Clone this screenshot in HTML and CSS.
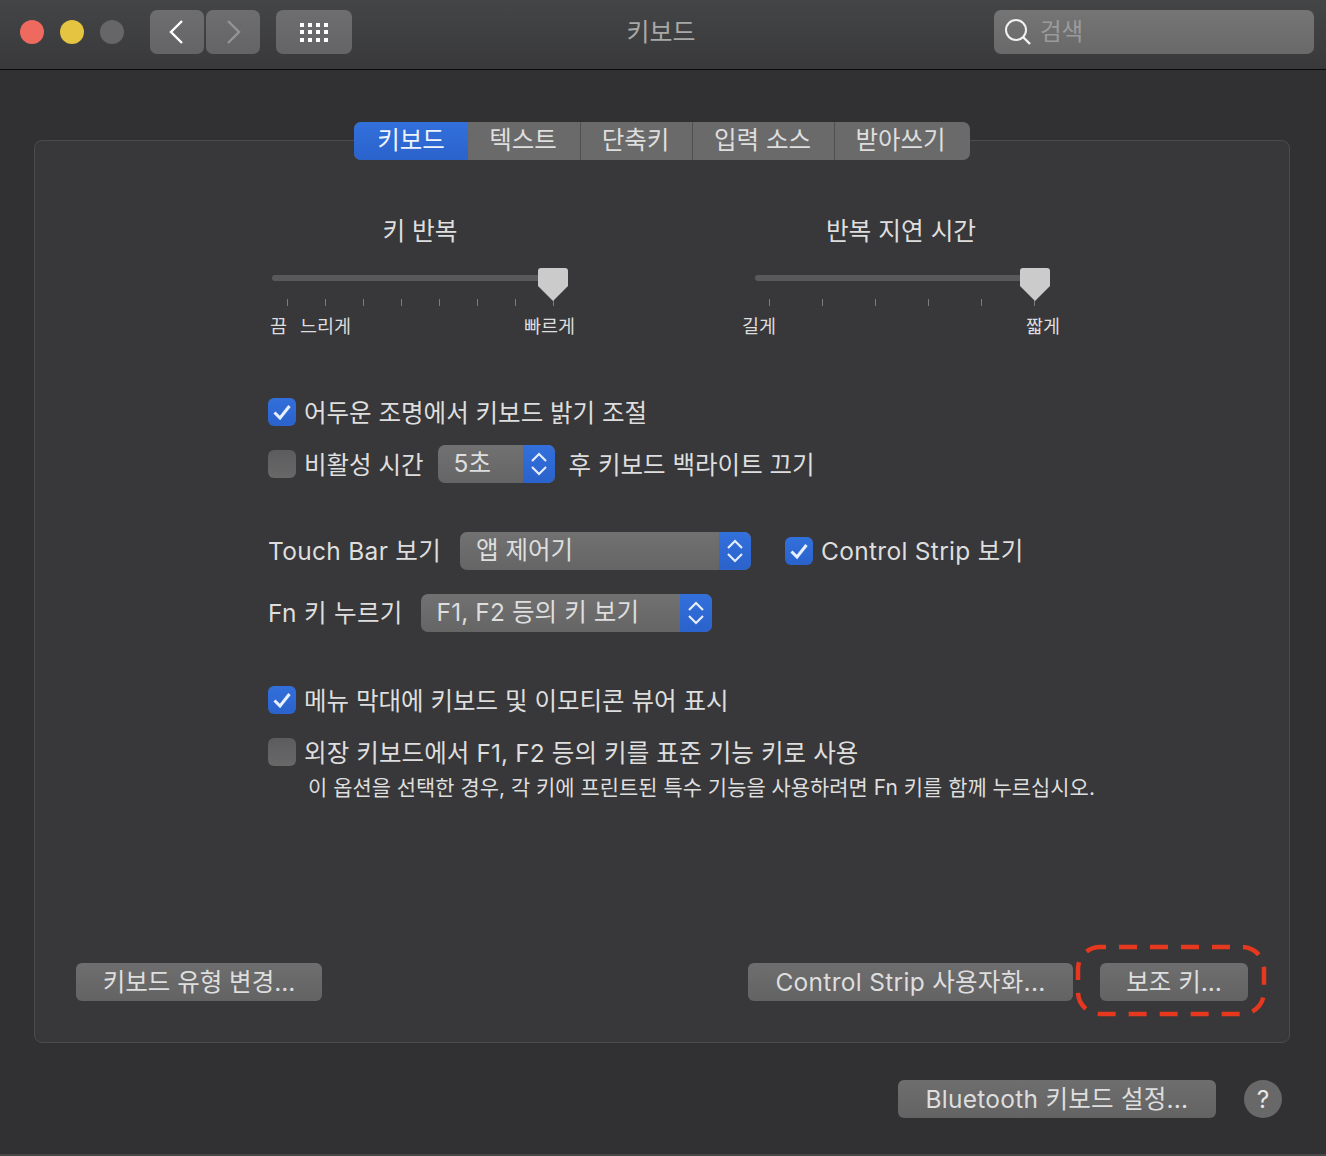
FILE: index.html
```html
<!DOCTYPE html>
<html lang="ko">
<head>
  <meta charset="UTF-8" />
  <title>키보드</title>
  <link rel="stylesheet" href="styles.css">
</head>
<body>
  <div class="window">
    <header class="toolbar">
      <div class="lights">
        <span class="light red"></span>
        <span class="light yellow"></span>
        <span class="light grey"></span>
      </div>
      <div class="nav">
        <div class="tool-btn nav-btn">
          <svg width="18" height="26" viewBox="0 0 18 26"><path d="M14 2 3 13l11 11" fill="none" stroke="#fff" stroke-width="2.4"/></svg>
        </div>
        <div class="tool-btn nav-btn">
          <svg width="18" height="26" viewBox="0 0 18 26"><path d="M4 2l11 11L4 24" fill="none" stroke="#949494" stroke-width="2.4"/></svg>
        </div>
      </div>
      <div class="tool-btn grid-btn">
        <svg width="30" height="20" viewBox="0 0 30 20" fill="#fff">
          <rect x="1" y="1" width="4" height="4"/><rect x="9" y="1" width="4" height="4"/><rect x="17" y="1" width="4" height="4"/><rect x="25" y="1" width="4" height="4"/>
          <rect x="1" y="8" width="4" height="4"/><rect x="9" y="8" width="4" height="4"/><rect x="17" y="8" width="4" height="4"/><rect x="25" y="8" width="4" height="4"/>
          <rect x="1" y="16" width="4" height="4"/><rect x="9" y="16" width="4" height="4"/><rect x="17" y="16" width="4" height="4"/><rect x="25" y="16" width="4" height="4"/>
        </svg>
      </div>
      <div class="window-title">키보드</div>
      <div class="search">
        <svg width="28" height="28" viewBox="0 0 28 28"><circle cx="12" cy="12" r="10" fill="none" stroke="#f2f2f2" stroke-width="2"/><path d="M19 19l7 7" stroke="#f2f2f2" stroke-width="2.4"/></svg>
        <span>검색</span>
      </div>
    </header>

    <main class="content">
      <section class="panel">
        <nav class="tabs">
          <div class="tab active tab-keyboard">키보드</div>
          <div class="tab tab-text">텍스트</div>
          <div class="tab tab-short">단축키</div>
          <div class="tab tab-input">입력 소스</div>
          <div class="tab tab-dict">받아쓰기</div>
        </nav>

        <div class="sliders">
          <div class="slider slider-repeat">
            <h2>키 반복</h2>
            <div class="slider-body">
              <div class="track"></div>
              <svg class="thumb" width="30" height="34" viewBox="0 0 30 34"><path d="M3 0h24a3 3 0 0 1 3 3v15L15 33 0 18V3a3 3 0 0 1 3-3z" fill="#cbcbcb"/></svg>
              <div class="ticks">
                <i></i><i></i><i></i><i></i><i></i><i></i><i></i><i></i>
              </div>
            </div>
            <div class="scale">
              <span>끔</span>
              <span class="slow">느리게</span>
              <span class="push">빠르게</span>
            </div>
          </div>
          <div class="slider slider-delay">
            <h2>반복 지연 시간</h2>
            <div class="slider-body">
              <div class="track"></div>
              <svg class="thumb" width="30" height="34" viewBox="0 0 30 34"><path d="M3 0h24a3 3 0 0 1 3 3v15L15 33 0 18V3a3 3 0 0 1 3-3z" fill="#cbcbcb"/></svg>
              <div class="ticks">
                <i></i><i></i><i></i><i></i><i></i><i></i>
              </div>
            </div>
            <div class="scale">
              <span>길게</span>
              <span class="push">짧게</span>
            </div>
          </div>
        </div>

        <div class="row row-backlight">
          <span class="check on"><svg width="20" height="18" viewBox="0 0 20 18"><path d="M2.500 9.500 8 15 17.500 3" fill="none" stroke="#e9f0fd" stroke-width="3"/></svg></span>
          <span>어두운 조명에서 키보드 밝기 조절</span>
        </div>
        <div class="row row-idle">
          <span class="check"></span>
          <span>비활성 시간</span>
          <div class="select select-time">
            <span class="select-value">5초</span>
            <span class="select-arrows"><svg width="18" height="26" viewBox="0 0 18 26"><path d="M2 10l7-7 7 7M2 16l7 7 7-7" fill="none" stroke="#e4ecfb" stroke-width="2.200"/></svg></span>
          </div>
          <span>후 키보드 백라이트 끄기</span>
        </div>

        <div class="row row-touchbar">
          <span class="latin">Touch Bar 보기</span>
          <div class="select select-touch">
            <span class="select-value">앱 제어기</span>
            <span class="select-arrows"><svg width="18" height="26" viewBox="0 0 18 26"><path d="M2 10l7-7 7 7M2 16l7 7 7-7" fill="none" stroke="#e4ecfb" stroke-width="2.200"/></svg></span>
          </div>
          <span class="check on strip-check"><svg width="20" height="18" viewBox="0 0 20 18"><path d="M2.500 9.500 8 15 17.500 3" fill="none" stroke="#e9f0fd" stroke-width="3"/></svg></span>
          <span class="latin">Control Strip 보기</span>
        </div>
        <div class="row row-fn">
          <span class="latin">Fn 키 누르기</span>
          <div class="select select-fn">
            <span class="select-value">F1, F2 등의 키 보기</span>
            <span class="select-arrows"><svg width="18" height="26" viewBox="0 0 18 26"><path d="M2 10l7-7 7 7M2 16l7 7 7-7" fill="none" stroke="#e4ecfb" stroke-width="2.200"/></svg></span>
          </div>
        </div>

        <div class="row row-menu">
          <span class="check on"><svg width="20" height="18" viewBox="0 0 20 18"><path d="M2.500 9.500 8 15 17.500 3" fill="none" stroke="#e9f0fd" stroke-width="3"/></svg></span>
          <span>메뉴 막대에 키보드 및 이모티콘 뷰어 표시</span>
        </div>
        <div class="row row-external">
          <span class="check"></span>
          <span class="external-label">외장 키보드에서 F1, F2 등의 키를 표준 기능 키로 사용</span>
        </div>
        <p class="note">이 옵션을 선택한 경우, 각 키에 프린트된 특수 기능을 사용하려면 Fn 키를 함께 누르십시오.</p>

        <div class="panel-actions">
          <div class="btn btn-type">키보드 유형 변경...</div>
          <div class="btn btn-strip">Control Strip 사용자화...</div>
          <div class="highlighted">
            <div class="btn btn-modifier">보조 키...</div>
            <svg class="dashes" width="194" height="76" viewBox="0 0 194 76"><rect x="4" y="4" width="186" height="67" rx="22" fill="none" stroke="#e5381f" stroke-width="4.500" stroke-dasharray="18 13" stroke-dashoffset="12"/></svg>
          </div>
        </div>
      </section>

      <footer class="footer">
        <div class="btn btn-bluetooth">Bluetooth 키보드 설정...</div>
        <div class="help">?</div>
      </footer>
    </main>
  </div>
</body>
</html>
```

FILE: styles.css
```css
* {
  box-sizing: border-box;
}

body {
  margin: 0;
  background: #313133;
  overflow: hidden;
  font-family: "Inter", "Noto Sans CJK KR", sans-serif;
  color: #dedede;
}

.window {
  width: 1326px;
  height: 1156px;
  display: flex;
  flex-direction: column;
  border-bottom: 2px solid #464648;
}

/* toolbar */

.toolbar {
  height: 70px;
  flex: none;
  display: flex;
  align-items: flex-start;
  padding: 10px 12px 0 20px;
  background: linear-gradient(#444546, #39393b);
  border-bottom: 1px solid #0b0b0b;
}

.lights {
  display: flex;
  gap: 16px;
  margin-top: 10px;
  margin-right: 26px;
}

.light {
  width: 24px;
  height: 24px;
  border-radius: 50%;
}

.red { background: #ee6a5f; }
.yellow { background: #e4c440; }
.grey { background: #666668; }

.tool-btn {
  height: 44px;
  display: flex;
  align-items: center;
  justify-content: center;
  border-radius: 7px;
  background: linear-gradient(#6e6e70, #646466);
}

.nav {
  display: flex;
  gap: 2px;
}

.nav-btn {
  width: 54px;
}

.grid-btn {
  width: 76px;
  margin-left: 16px;
}

.window-title {
  flex: 1;
  padding-right: 24px;
  line-height: 44px;
  text-align: center;
  font-size: 25px;
  color: #a8a8a8;
}

.search {
  width: 320px;
  height: 44px;
  display: flex;
  align-items: center;
  gap: 8px;
  padding: 0 10px;
  border-radius: 7px;
  background: linear-gradient(#757575, #696969);
  font-size: 23.500px;
  color: #9b9b9b;
}

.search span {
  margin-bottom: 5px;
}

/* panel */

.content {
  flex: 1;
  padding: 70px 36px 0 34px;
}

.panel {
  height: 903px;
  display: flex;
  flex-direction: column;
  padding: 0 40px 41px 233px;
  border: 1px solid #4b4b4d;
  border-radius: 8px;
  background: #38383a;
  font-size: 24.500px;
}

.tabs {
  display: flex;
  height: 38px;
  margin: -19px 0 0 86px;
  align-self: flex-start;
  border-radius: 7px;
  background: #6a6a6b;
  overflow: hidden;
}

.tab {
  display: flex;
  align-items: center;
  justify-content: center;
  padding: 0 2px 5px 0;
  border-right: 1px solid #505051;
}

.tab:last-child {
  border-right: 0;
  padding-right: 4px;
}

.tab.active {
  background: linear-gradient(#3270dc, #2b62cb);
  border-right: 0;
  padding-right: 0;
  color: #eef3fc;
}

.tab-keyboard { width: 114px; }
.tab-text { width: 113px; }
.tab-short { width: 112px; }
.tab-input { width: 142px; }
.tab-dict { width: 135px; }

/* sliders */

.sliders {
  display: flex;
  gap: 167px;
  margin: 55px 0 0 -3px;
}

.slider-repeat { width: 310px; }
.slider-delay { width: 318px; }

.slider h2 {
  margin: 0;
  height: 30px;
  line-height: 32px;
  text-align: center;
  font-size: 24.700px;
  font-weight: 400;
}

.slider-body {
  position: relative;
  height: 47px;
  margin-top: 23px;
  padding-top: 7px;
}

.track {
  height: 6px;
  border-radius: 3px;
  background: #59595b;
}

.slider-repeat .track {
  margin: 0 20px 0 7px;
}

.slider-delay .track {
  margin: 0 20px 0 13px;
}

.thumb {
  position: absolute;
  top: 0;
}

.slider-repeat .thumb { left: 273px; }
.slider-delay .thumb { left: 278px; }

.ticks {
  display: flex;
  margin-top: 18px;
}

.slider-repeat .ticks {
  gap: 37px;
  padding-left: 22px;
}

.slider-delay .ticks {
  gap: 52px;
  padding-left: 27px;
}

.ticks i {
  width: 1px;
  height: 7px;
  background: #7b7b7d;
}

.scale {
  display: flex;
  height: 22px;
  line-height: 23px;
  font-size: 18.500px;
}

.slider-repeat .scale {
  padding-left: 5px;
}

.slow {
  margin-left: 13px;
}

.push {
  margin-left: auto;
}

/* form rows */

.row {
  display: flex;
  align-items: center;
  height: 38px;
  white-space: nowrap;
}

.row > span {
  margin-bottom: 2px;
}

.row > .latin {
  margin-bottom: 3px;
  letter-spacing: 0.3px;
}

.row > .check {
  margin-bottom: 0;
}

.row > .external-label {
  letter-spacing: 0.1px;
}

.row-backlight { margin-top: 56px; }
.row-idle { margin-top: 14px; }
.row-touchbar { margin-top: 49px; }
.row-fn { margin-top: 24px; }
.row-menu { margin-top: 49px; }
.row-external { margin-top: 14px; }

.check {
  width: 28px;
  height: 28px;
  flex: none;
  display: flex;
  align-items: center;
  justify-content: center;
  margin-right: 8px;
  border-radius: 6px;
  background: linear-gradient(#5c5c5e, #686869);
}

.check.on {
  background: linear-gradient(#3270dc, #2b62cb);
}

.strip-check {
  margin-left: 34px;
}

.select {
  height: 38px;
  display: flex;
  border-radius: 7px;
  overflow: hidden;
  background: linear-gradient(#717171, #656565);
}

.select-value {
  flex: 1;
  padding-left: 16px;
  line-height: 37px;
}

.select-arrows {
  width: 32px;
  display: flex;
  align-items: center;
  justify-content: center;
  background: linear-gradient(#3270dc, #2b62cb);
}

.select-time {
  width: 117px;
  margin: 0 14px;
}

.select-touch {
  width: 291px;
  margin-left: 19px;
}

.select-fn {
  width: 291px;
  margin-left: 18px;
  letter-spacing: 0.1px;
}

.note {
  margin: 2px 0 0;
  padding-left: 40px;
  height: 30px;
  line-height: 30px;
  font-size: 20.950px;
  white-space: nowrap;
}

/* buttons */

.panel-actions {
  display: flex;
  align-items: flex-end;
  margin: auto 0 0 -192px;
}

.btn {
  height: 38px;
  display: flex;
  align-items: center;
  justify-content: center;
  padding-bottom: 4px;
  border-radius: 6px;
  background: linear-gradient(#6e6e6f, #636364);
  white-space: nowrap;
}

.btn-type { width: 246px; }
.btn-strip { width: 325px; margin-left: 426px; letter-spacing: 0.3px; }

.highlighted {
  position: relative;
  margin-left: 27px;
}

.btn-modifier { width: 148px; }

.dashes {
  position: absolute;
  left: -26px;
  top: -20px;
}

.footer {
  display: flex;
  justify-content: flex-end;
  align-items: center;
  gap: 28px;
  margin-top: 37px;
  padding-right: 8px;
  font-size: 24.500px;
}

.btn-bluetooth { width: 318px; letter-spacing: 0.25px; }

.help {
  width: 38px;
  height: 38px;
  border-radius: 50%;
  display: flex;
  align-items: center;
  justify-content: center;
  background: #686869;
  color: #e6e6e6;
}
```
